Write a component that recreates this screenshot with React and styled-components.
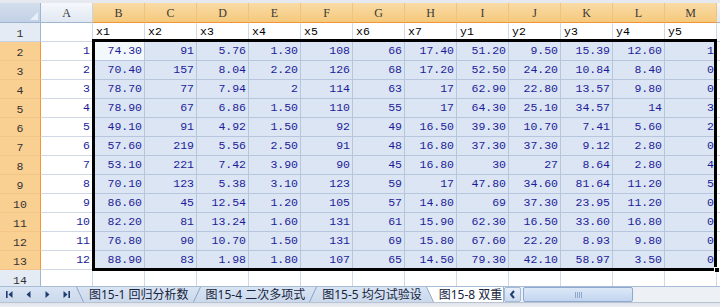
import React from 'react';
import styled, { createGlobalStyle, css } from 'styled-components';

const GlobalStyle = createGlobalStyle`
  html, body { margin: 0; padding: 0; background: #fff; }
  body { width: 720px; height: 307px; overflow: hidden; font-family: "Liberation Mono", monospace; }
  * { box-sizing: border-box; }
`;

const Page = styled.div`
  display: flex;
  flex-direction: column;
  width: 720px;
  height: 307px;
  overflow: hidden;
`;

const TopStrip = styled.div`
  flex: none;
  height: 3px;
  background: #e6eaf0;
`;

const SheetArea = styled.div`
  position: relative;
  flex: 1;
  min-height: 0;
  overflow: hidden;
`;

const Grid = styled.div`
  display: grid;
  grid-template-columns: 41px repeat(13, 52px) 1fr;
  grid-template-rows: 20px repeat(14, 19px);
`;

const Corner = styled.div`
  display: flex;
  align-items: flex-end;
  justify-content: flex-end;
  padding: 0 2px 2px 0;
  background: linear-gradient(#d3deed, #c2d1e5);
  border-right: 1px solid #9eb6ce;
  border-bottom: 1px solid #9eb6ce;
`;

const ColHeader = styled.div`
  display: flex;
  align-items: center;
  justify-content: center;
  font-family: "Liberation Serif", serif;
  font-size: 12px;
  color: #3a3a3a;
  padding-top: 1px;
  background: ${p => (p.$active ? 'linear-gradient(#f9dba6, #f5c97c)' : 'linear-gradient(#f5f8fc, #e1e8f2)')};
  border-right: 1px solid ${p => (p.$active ? '#f0c37f' : '#c9d5e5')};
  border-bottom: 1px solid ${p => (p.$active ? '#f29536' : '#9eb6ce')};
`;

const RowHeader = styled.div`
  display: flex;
  align-items: center;
  justify-content: center;
  font-family: "Liberation Mono", monospace;
  font-size: 11.5px;
  color: #333;
  padding-top: 2px;
  background: ${p => (p.$active ? '#f9cf92' : '#e4ebf5')};
  border-right: 1px solid ${p => (p.$active ? '#f29536' : '#9eb6ce')};
  border-bottom: 1px solid ${p => (p.$active ? '#f3c688' : '#c5d2e3')};
`;

const Cell = styled.div`
  display: flex;
  align-items: flex-end;
  justify-content: ${p => (p.$align === 'left' ? 'flex-start' : 'flex-end')};
  padding: 0 2px 2px 3px;
  font-family: "Liberation Mono", monospace;
  font-size: 11.5px;
  line-height: 14px;
  white-space: nowrap;
  overflow: hidden;
  color: ${p => p.$ink || '#1c1c9a'};
  background: #fff;
  border-right: 1px solid #d0d7e5;
  border-bottom: 1px solid #d0d7e5;
  ${p =>
    p.$sel &&
    css`
      background: ${p.$current ? '#f3f8fd' : '#dbe5f3'};
      border-right-color: #b7c5dd;
      border-bottom-color: #b7c5dd;
    `}
`;

const SelectionFrame = styled.div`
  position: absolute;
  left: 92px;
  top: 36px;
  width: 625px;
  height: 232px;
  border: 3px solid #000;
  pointer-events: none;
`;

const FillHandle = styled.div`
  position: absolute;
  right: -6px;
  bottom: -5px;
  width: 6px;
  height: 6px;
  background: #000;
  border: 1px solid #fff;
`;

const TabBar = styled.div`
  flex: none;
  height: 21px;
  display: flex;
  flex-direction: column;
`;

const TabRow = styled.div`
  flex: none;
  height: 16px;
  display: flex;
  align-items: stretch;
  background: linear-gradient(#d9e4f3, #cbd9ec);
  border-top: 1px solid #a7bcd6;
`;

const BottomBand = styled.div`
  flex: 1;
  background: linear-gradient(#dfe3e9, #eceef2);
  border-top: 1px solid #b9c4d3;
`;

const NavArea = styled.div`
  flex: none;
  width: 76px;
  display: flex;
`;

const NavButton = styled.div`
  flex: none;
  width: 19px;
  display: flex;
  align-items: center;
  justify-content: center;
  color: #1f3d6d;
`;

const TabStrip = styled.div`
  flex: none;
  width: 427px;
  display: flex;
  overflow: hidden;
  font-family: "Noto Sans", "Noto Sans CJK SC", sans-serif;
  font-size: 12px;
`;

const Tab = styled.div`
  flex: none;
  display: flex;
  align-items: center;
  padding: 0 4px 0 5px;
  white-space: nowrap;
  color: #16243d;
  line-height: 15px;
  background: ${p => (p.$active ? '#fff' : 'transparent')};
  ${p =>
    p.$active &&
    css`
      flex: 1;
    `}
`;

const SlantBox = styled.svg`
  flex: none;
  display: block;
`;

const Slant = ({ dir, fillRight }) => (
  <SlantBox width="8" height="15" viewBox="0 0 8 15">
    {fillRight && <polygon points="0,0 8,0 8,15 7,15" fill="#fff" />}
    {dir === 'back' ? (
      <line x1="0.5" y1="0" x2="7.5" y2="15" stroke="#8aa3c4" strokeWidth="1" />
    ) : (
      <line x1="7.5" y1="0" x2="0.5" y2="15" stroke="#8aa3c4" strokeWidth="1" />
    )}
  </SlantBox>
);

const ScrollArea = styled.div`
  flex: 1;
  display: flex;
  align-items: stretch;
  background: #edf0f5;
  border-left: 1px solid #9fb3cf;
`;

const ScrollButton = styled.div`
  flex: none;
  width: 17px;
  display: flex;
  align-items: center;
  justify-content: center;
  background: linear-gradient(#e6eef9, #cbdaef);
  border: 1px solid #a3b8d6;
  border-radius: 2px;
  color: #1f3d6d;
`;

const Track = styled.div`
  flex: 1;
  display: flex;
  padding: 0 0 0 2px;
`;

const Thumb = styled.div`
  flex: none;
  width: 110px;
  display: flex;
  align-items: center;
  justify-content: center;
  background: linear-gradient(#dce8f7, #c2d5ef);
  border: 1px solid #8ea9d0;
  border-radius: 2px;
`;

const Grip = styled.div`
  width: 7px;
  height: 6px;
  background: repeating-linear-gradient(90deg, #8ca6cc 0 1px, transparent 1px 2px);
`;

const cols = ['A', 'B', 'C', 'D', 'E', 'F', 'G', 'H', 'I', 'J', 'K', 'L', 'M'];
const headers = ['x1', 'x2', 'x3', 'x4', 'x5', 'x6', 'x7', 'y1', 'y2', 'y3', 'y4', 'y5'];
const data = [
  ['74.30', '91', '5.76', '1.30', '108', '66', '17.40', '51.20', '9.50', '15.39', '12.60', '1'],
  ['70.40', '157', '8.04', '2.20', '126', '68', '17.20', '52.50', '24.20', '10.84', '8.40', '0'],
  ['78.70', '77', '7.94', '2', '114', '63', '17', '62.90', '22.80', '13.57', '9.80', '0'],
  ['78.90', '67', '6.86', '1.50', '110', '55', '17', '64.30', '25.10', '34.57', '14', '3'],
  ['49.10', '91', '4.92', '1.50', '92', '49', '16.50', '39.30', '10.70', '7.41', '5.60', '2'],
  ['57.60', '219', '5.56', '2.50', '91', '48', '16.80', '37.30', '37.30', '9.12', '2.80', '0'],
  ['53.10', '221', '7.42', '3.90', '90', '45', '16.80', '30', '27', '8.64', '2.80', '4'],
  ['70.10', '123', '5.38', '3.10', '123', '59', '17', '47.80', '34.60', '81.64', '11.20', '5'],
  ['86.60', '45', '12.54', '1.20', '105', '57', '14.80', '69', '37.30', '23.95', '11.20', '0'],
  ['82.20', '81', '13.24', '1.60', '131', '61', '15.90', '62.30', '16.50', '33.60', '16.80', '0'],
  ['76.80', '90', '10.70', '1.50', '131', '69', '15.80', '67.60', '22.20', '8.93', '9.80', '0'],
  ['88.90', '83', '1.98', '1.80', '107', '65', '14.50', '79.30', '42.10', '58.97', '3.50', '0'],
];

const Icon = ({ kind }) => (
  <svg width="9" height="9" viewBox="0 0 9 9" fill="currentColor">
    {kind === 'first' && (
      <>
        <rect x="1" y="1" width="1.6" height="7" />
        <polygon points="7.5,1 3.5,4.5 7.5,8" />
      </>
    )}
    {kind === 'prev' && <polygon points="6.5,1 2.5,4.5 6.5,8" />}
    {kind === 'next' && <polygon points="2.5,1 6.5,4.5 2.5,8" />}
    {kind === 'last' && (
      <>
        <polygon points="1.5,1 5.5,4.5 1.5,8" />
        <rect x="6.4" y="1" width="1.6" height="7" />
      </>
    )}
  </svg>
);

export default function App() {
  return (
    <>
      <GlobalStyle />
      <Page>
        <TopStrip />
        <SheetArea>
          <Grid>
            <Corner>
              <svg width="8" height="8" viewBox="0 0 8 8">
                <polygon points="8,0 8,8 0,8" fill="#e9eff8" />
              </svg>
            </Corner>
            {cols.map(c => (
              <ColHeader key={c} $active={c !== 'A'}>
                {c}
              </ColHeader>
            ))}
            <ColHeader />

            <RowHeader>1</RowHeader>
            <Cell />
            {headers.map(h => (
              <Cell key={h} $align="left" $ink="#000">
                {h}
              </Cell>
            ))}
            <Cell />

            {data.map((row, i) => (
              <React.Fragment key={i}>
                <RowHeader $active>{i + 2}</RowHeader>
                <Cell>{i + 1}</Cell>
                {row.map((v, j) => (
                  <Cell key={j} $sel $current={i === 0 && j === 0}>
                    {v}
                  </Cell>
                ))}
                <Cell />
              </React.Fragment>
            ))}

            <RowHeader>14</RowHeader>
            {Array.from({ length: 14 }, (_, k) => (
              <Cell key={k} />
            ))}
          </Grid>
          <SelectionFrame>
            <FillHandle />
          </SelectionFrame>
        </SheetArea>

        <TabBar>
          <TabRow>
            <NavArea>
              <NavButton><Icon kind="first" /></NavButton>
              <NavButton><Icon kind="prev" /></NavButton>
              <NavButton><Icon kind="next" /></NavButton>
              <NavButton><Icon kind="last" /></NavButton>
            </NavArea>
            <TabStrip>
              <Slant dir="back" />
              <Tab>图15-1 回归分析数</Tab>
              <Slant dir="fwd" />
              <Tab>图15-4 二次多项式</Tab>
              <Slant dir="fwd" />
              <Tab>图15-5 均匀试验设</Tab>
              <Slant dir="back" fillRight />
              <Tab $active>图15-8 双重</Tab>
            </TabStrip>
            <ScrollArea>
              <ScrollButton>
                <svg width="7" height="9" viewBox="0 0 7 9">
                  <polyline points="5,1 2,4.5 5,8" fill="none" stroke="currentColor" strokeWidth="2" />
                </svg>
              </ScrollButton>
              <Track>
                <Thumb>
                  <Grip />
                </Thumb>
              </Track>
            </ScrollArea>
          </TabRow>
          <BottomBand />
        </TabBar>
      </Page>
    </>
  );
}
